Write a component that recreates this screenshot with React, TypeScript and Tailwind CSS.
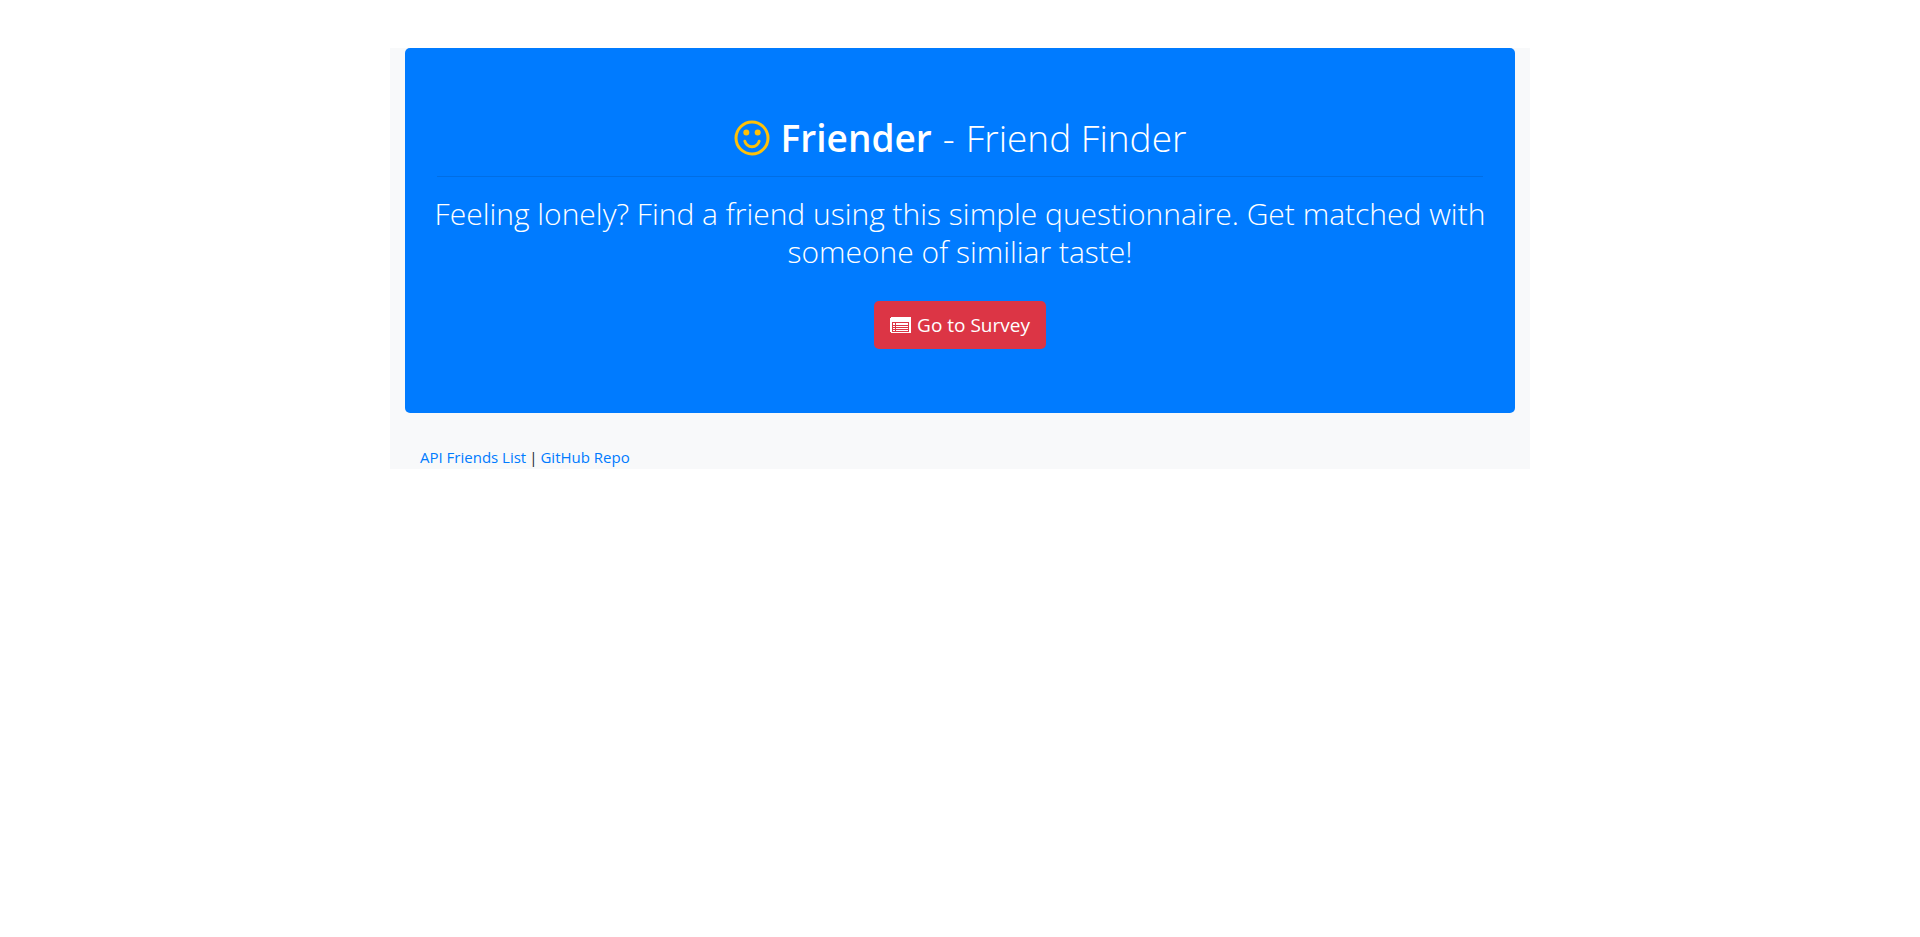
function SmileIcon() {
  return (
    <svg viewBox="0 0 36 36" className="size-9 shrink-0 text-[#ffc107]" fill="none" stroke="currentColor" aria-hidden="true">
      <circle cx="18" cy="18" r="16" strokeWidth="3" />
      <circle cx="12.3" cy="12.4" r="3" fill="currentColor" stroke="none" />
      <circle cx="23.7" cy="12.4" r="3" fill="currentColor" stroke="none" />
      <path d="M10.8 21.2c1 3.400 3.800 5.500 7.200 5.500s6.200-2.100 7.200-5.500" strokeWidth="2.900" strokeLinecap="round" />
    </svg>
  );
}

function ListIcon() {
  return (
    <svg viewBox="0 0 21 16" className="h-4 w-[21px] shrink-0" fill="currentColor" shapeRendering="crispEdges" aria-hidden="true">
      <path fillRule="evenodd" d="M1 0h19l1 1v14l-1 1H1l-1-1V1ZM2 5v10h17V5Z" />
      <path d="M3 6h2v2H3zM6 6h12v2H6zM3 9h2v1H3zM6 9h12v1H6zM3 11h2v1H3zM6 11h12v1H6zM3 13h2v1H3zM6 13h12v1H6z" />
    </svg>
  );
}

export default function App() {
  return (
    <div className="mx-auto mt-12 max-w-[1140px] bg-[#f8f9fa] px-[15px] font-['Open_Sans','Noto_Sans',sans-serif] text-[#212529]">
      <main className="rounded-[5px] bg-[#007bff] px-8 pt-[66px] pb-16 text-center text-white">
        <h1 className="flex items-center justify-center gap-[11px] text-[37px] leading-[48px] font-light">
          <SmileIcon />
          <strong className="font-semibold">Friender</strong>
          <span>-</span>
          <span>Friend Finder</span>
        </h1>
        <hr className="mt-[14px] mb-[18px] border-black/10" />
        <p className="-mx-2 text-[30px] leading-[38px] font-light">
          Feeling lonely? Find a friend using this simple questionnaire. Get matched with someone of similiar taste!
        </p>
        <a href="#survey" className="mt-[30px] inline-flex h-12 items-center gap-1.5 rounded-[5px] bg-[#dc3545] px-4 text-[19px]">
          <ListIcon />
          Go to Survey
        </a>
      </main>
      <footer className="flex gap-[3px] px-[15px] pt-8 text-[15px] leading-6">
        <a href="#api" className="text-[#007bff]">API Friends List</a>
        <span>|</span>
        <a href="#repo" className="text-[#007bff]">GitHub Repo</a>
      </footer>
    </div>
  );
}
